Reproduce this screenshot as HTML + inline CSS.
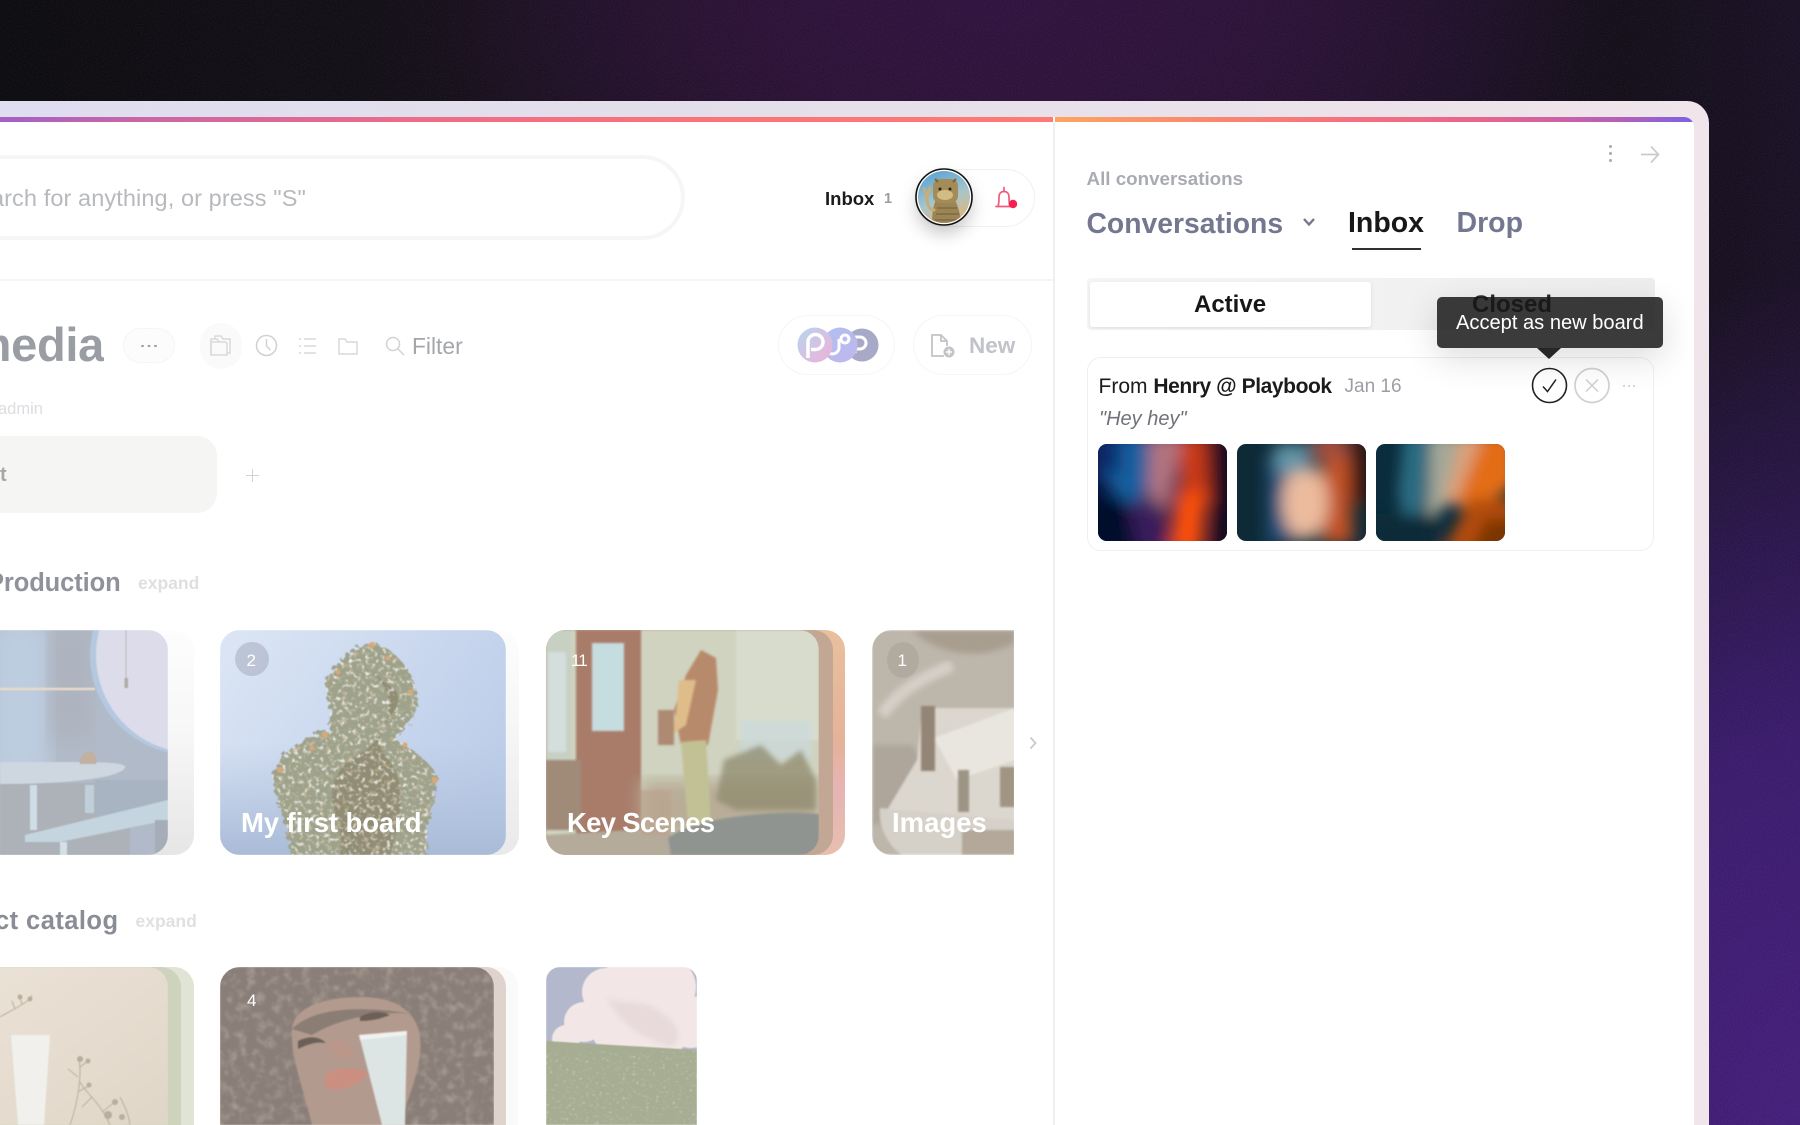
<!DOCTYPE html>
<html lang="en"><head><meta charset="utf-8"><title>Inbox</title>
<style>
html,body{margin:0;padding:0;width:1800px;height:1125px;overflow:hidden;background:#100c14}
body{font-family:"Liberation Sans",sans-serif}
#root{position:relative;width:1800px;height:1125px;overflow:hidden;contain:paint}
.a{position:absolute}
.t{position:absolute;white-space:nowrap;line-height:1}
.b{font-weight:700}
.card{position:absolute;overflow:hidden}
svg{display:block}
</style></head><body><div id="root">

<!-- background -->
<div class="a" style="left:0;top:0;width:1800px;height:1125px;background:
radial-gradient(500px 850px at 1800px 1125px,#421c78 0%,#37186a 45%,rgba(45,20,85,0) 100%),
radial-gradient(600px 300px at 1000px 0px,#2e0f3c 0%,rgba(44,15,56,.7) 50%,rgba(40,14,50,0) 100%),
linear-gradient(90deg,#09080c 0%,#110c15 25%,#220d2a 55%,#1c0d28 72%,#100b16 90%,#170d22 100%)"></div>
<svg class="a" style="left:0;top:0;opacity:.07" width="1800" height="1125"><filter id="n"><feTurbulence type="fractalNoise" baseFrequency=".9" numOctaves="2"/><feColorMatrix values="0 0 0 0 1 0 0 0 0 1 0 0 0 0 1 0 0 0 1.4 -.3"/></filter><rect width="1800" height="1125" filter="url(#n)"/></svg>

<!-- frame -->
<div class="a" style="left:0;top:100.500px;width:1709px;height:1024.500px;border-radius:0 22px 0 0;background:linear-gradient(90deg,#dfddf0 0%,#e3dfea 40%,#ece3ea 80%,#efe5ea 100%)"></div>
<div class="a" style="left:0;top:117px;width:1693.500px;height:1008px;border-radius:0 10px 0 0;background:#fff;overflow:hidden">
  <div class="a" style="left:0;top:0;width:1053px;height:5px;background:linear-gradient(90deg,#a55fc6 0%,#c766a6 12%,#ee6c88 40%,#fb7279 65%,#ff7a76 100%)"></div>
  <div class="a" style="left:1055px;top:0;width:639px;height:5px;background:linear-gradient(90deg,#fba562 0%,#fb8a6c 22%,#f7707f 45%,#e6648f 68%,#b55fb9 88%,#7d61e3 100%)"></div>
</div>
<div class="a" style="left:1053px;top:122px;width:1.500px;height:1003px;background:#eeeff2"></div>

<!-- search -->
<div class="a" style="left:-60px;top:159px;width:741px;height:77px;border-radius:40px;background:#fff;box-shadow:0 0 0 4px #f6f6f7"></div>
<div class="t" style="left:-38px;top:187px;font-size:23.500px;color:#b7b9bd;letter-spacing:.1px">Search for anything, or press "S"</div>
<div class="a" style="left:0;top:279px;width:1053px;height:1.500px;background:#f4f4f5"></div>

<!-- inbox + avatar -->
<div class="t b" style="left:825px;top:190px;font-size:18.500px;color:#1b1b1d">Inbox</div>
<div class="t b" style="left:884px;top:192px;font-size:14.500px;color:#9a9ca2">1</div>
<div class="a" style="left:915px;top:169px;width:118px;height:56px;border-radius:29px;background:#fff;border:1px solid #f0f0f2"></div>
<svg class="a" style="left:905px;top:158px;overflow:visible" width="80" height="80" viewBox="0 0 80 80">
  <defs><linearGradient id="cs" x1=".2" y1="0" x2=".6" y2="1"><stop offset="0" stop-color="#4f9fd8"/><stop offset=".55" stop-color="#a9c6c9"/><stop offset="1" stop-color="#eab06a"/></linearGradient>
  <filter id="as" x="-50%" y="-50%" width="200%" height="200%"><feDropShadow dx="0" dy="9" stdDeviation="8" flood-color="#000" flood-opacity=".2"/></filter><clipPath id="cc"><circle cx="39" cy="39" r="26"/></clipPath></defs>
  <circle cx="39" cy="39" r="28.500" fill="#fff" filter="url(#as)"/>
  <circle cx="39" cy="39" r="28" fill="#fff" stroke="#111" stroke-width="1.600"/>
  <g clip-path="url(#cc)"><rect x="10" y="10" width="60" height="60" fill="url(#cs)"/>
  <path d="M27 70C27 55 28 48 31 42H50C54 50 56 60 57 70Z" fill="#9c8554"/>
  <rect x="28" y="21" width="25" height="24" rx="7" fill="#a38c58"/>
  <path d="M30 21L33 24M51 21L48 24" stroke="#7a6435" stroke-width="2"/>
  <ellipse cx="40" cy="37" rx="8" ry="5" fill="#d3bc84"/>
  <circle cx="35" cy="31" r="1.500" fill="#2c2415"/><circle cx="45" cy="31" r="1.500" fill="#2c2415"/>
  <path d="M32 50H52M31 56H54M30 62H55" stroke="#7a6540" stroke-width="1.200"/>
  <path d="M29 52C24 52 22 46 22 38M22 38L19 31M22 38L25 30" stroke="#c9ad77" stroke-width="3" fill="none" stroke-linecap="round"/></g>
</svg>
<svg class="a" style="left:990px;top:184px" width="30" height="30" viewBox="0 0 30 30" fill="none"><path d="M6 22.500h16M8 22.500C9 20 9 17 9 13C9 9.500 11 7.500 14 7.500S19 9.500 19 13C19 17 19 20 20 22.500M14 7.500V3.500" stroke="#ef5b7e" stroke-width="1.700" stroke-linecap="round" stroke-linejoin="round"/><circle cx="23" cy="20" r="4.200" fill="#f5224f"/></svg>

<!-- title row -->
<div class="t b" style="left:-2px;top:320px;font-size:47px;color:#9a9da3;letter-spacing:-.3px;width:106px;direction:rtl;overflow:hidden;line-height:50px">media</div>
<div class="a" style="left:123px;top:328px;width:52px;height:35px;border-radius:18px;background:#fcfcfc;border:1px solid #f5f5f6;box-sizing:border-box"></div>
<div class="a" style="left:141px;top:344.500px;width:2.500px;height:2.500px;border-radius:50%;background:#9b9da2;box-shadow:6.500px 0 #9b9da2,13px 0 #9b9da2"></div>
<div class="a" style="left:200px;top:323px;width:42px;height:46px;border-radius:21px;background:#fafafb"></div>
<svg class="a" style="left:208px;top:333px" width="28" height="26" viewBox="0 0 28 26" fill="none" stroke="#d8d9dc" stroke-width="1.500"><path d="M3 9h14c1 0 2 1 2 2v11H3z"/><path d="M3 22V6h6l2 3M7 6V3h6l2 3h7v14h-3"/></svg>
<svg class="a" style="left:254px;top:333px" width="25" height="25" viewBox="0 0 25 25" fill="none" stroke="#d0d1d4" stroke-width="1.500"><circle cx="12.500" cy="12.500" r="10"/><path d="M12.500 6v7l4 4"/></svg>
<svg class="a" style="left:297px;top:336px" width="22" height="20" viewBox="0 0 22 20" fill="none" stroke="#d8d9dc" stroke-width="1.500"><path d="M7 3h12M7 10h12M7 17h12"/><path d="M2 3h2M2 10h2M2 17h2" stroke-dasharray="2 1"/></svg>
<svg class="a" style="left:337px;top:335px" width="22" height="22" viewBox="0 0 22 22" fill="none" stroke="#d8d9dc" stroke-width="1.500"><path d="M2 4h6l2 3h10v12H2z"/></svg>
<svg class="a" style="left:384px;top:335px" width="22" height="22" viewBox="0 0 22 22" fill="none" stroke="#d2d3d6" stroke-width="1.500"><circle cx="9" cy="9" r="6.500"/><path d="M14 14l6 6"/></svg>
<div class="t" style="left:412px;top:335px;font-size:22.800px;color:#a4a6ab">Filter</div>
<div class="t" style="left:-2px;top:401px;font-size:16.500px;color:#dcdde0">admin</div>

<div class="a" style="left:-40px;top:436px;width:257px;height:77px;border-radius:20px;background:#f5f5f3"></div>
<div class="t b" style="left:0;top:465px;font-size:20px;color:#a6a7a9">t</div>
<div class="a" style="left:246px;top:474.500px;width:13px;height:1.500px;background:#d2d3d6"></div>
<div class="a" style="left:251.800px;top:468.500px;width:1.500px;height:13px;background:#d2d3d6"></div>

<!-- right top pills -->
<div class="a" style="left:778px;top:315px;width:117px;height:60px;border-radius:30px;background:#fff;border:1px solid #f5f5f6;box-sizing:border-box"></div>
<svg class="a" style="left:795px;top:325px" width="85" height="40" viewBox="0 0 85 40">
  <defs><linearGradient id="p1" x1="0" y1="0" x2="1" y2="1"><stop offset="0" stop-color="#b5d6ee"/><stop offset="1" stop-color="#f0afd8"/></linearGradient>
  <linearGradient id="p2" x1="0" y1="0" x2="1" y2="1"><stop offset="0" stop-color="#afc0f2"/><stop offset="1" stop-color="#c1b6ec"/></linearGradient></defs>
  <circle cx="67" cy="20" r="16.500" fill="#a7a9c6"/><path d="M60 28V12h5a6 6 0 0 1 0 12h-4" stroke="#fff" stroke-width="3" fill="none"/>
  <circle cx="45" cy="20" r="17.500" fill="url(#p2)"/><path d="M44 14v10a7 7 0 0 1-10 4M50 10a4 4 0 1 1-.1 0" stroke="#fff" stroke-width="3" fill="none"/>
  <circle cx="20" cy="20" r="17.500" fill="url(#p1)"/><path d="M13 33V17a7.500 7.500 0 1 1 7.500 7.500H16" stroke="#fff" stroke-width="3.500" fill="none"/>
</svg>
<div class="a" style="left:913px;top:315px;width:119px;height:60px;border-radius:30px;background:#fff;border:1px solid #f5f5f6;box-sizing:border-box"></div>
<svg class="a" style="left:929px;top:333px" width="28" height="26" viewBox="0 0 28 26" fill="none" stroke="#c3c4c8" stroke-width="1.800"><path d="M15 23H3V2h9l6 6v5"/><path d="M12 2v6h6"/><circle cx="20" cy="19" r="5.500" fill="#c3c4c8" stroke="none"/><path d="M20 16v6M17 19h6" stroke="#fff" stroke-width="1.500"/></svg>
<div class="t b" style="left:969px;top:335px;font-size:22.500px;color:#c1c3c9">New</div>

<!-- section 1 -->
<div class="t b" style="left:-13px;top:571px;font-size:25.500px;color:#8f929a;letter-spacing:-.1px">Production</div>
<div class="t b" style="left:138px;top:575px;font-size:17.500px;color:#dedfe1">expand</div>

<!-- card 1 stack -->
<div class="a" style="left:-40px;top:630px;width:233.500px;height:225px;border-radius:20px;background:linear-gradient(180deg,#fdfdfd 0%,#f7f7f7 45%,#e6e6e7 100%)"></div>
<div class="card" style="left:-40px;top:630px;width:208px;height:225px;border-radius:20px">
<svg width="208" height="225" viewBox="0 0 208 225" style="filter:blur(.6px)">
 <defs><filter id="b3"><feGaussianBlur stdDeviation="3"/></filter><filter id="b12"><feGaussianBlur stdDeviation="12"/></filter></defs>
 <rect width="208" height="225" fill="#b0bac8"/>
 <rect x="30" y="-10" width="60" height="160" fill="#bdcde0" filter="url(#b12)"/>
 <rect x="90" y="-10" width="42" height="120" fill="#aeb4be" filter="url(#b12)"/>
 <circle cx="230" cy="25" r="100" fill="#b4c8e0"/>
 <circle cx="234" cy="25" r="98" fill="#dcdcea"/>
 <path d="M40 59H135" stroke="#e8dacb" stroke-width="2.500"/>
 <path d="M166 0V50" stroke="#bbb" stroke-width="1"/><rect x="164.500" y="48" width="3.500" height="10" fill="#b0aca6"/>
 <rect x="40" y="153" width="130" height="72" fill="#adb2b9"/>
 <rect x="135" y="150" width="73" height="40" fill="#a9b4c3"/>
 <path d="M40 132H120C155 132 168 134 165 138C158 148 110 154 40 154Z" fill="#ced7df"/>
 <path d="M120 134C118 128 126 120 133 122C137 126 137 132 136 134Z" fill="#c2b0a0"/>
 <rect x="70" y="155" width="7" height="45" fill="#cfdde6"/><rect x="125" y="155" width="9" height="28" fill="#bfd0da"/>
 <path d="M65 205L208 170V190L100 212H65Z" fill="#c4d5df"/><rect x="100" y="212" width="7" height="13" fill="#d3e0ea"/>
 <rect x="195" y="190" width="13" height="35" fill="#a5adb8"/>
</svg></div>

<!-- card 2 stack -->
<div class="a" style="left:220px;top:630px;width:298.500px;height:225px;border-radius:20px;background:linear-gradient(180deg,#fdfdfd 0%,#f7f7f8 40%,#e9e9eb 100%)"></div>
<div class="card" style="left:220px;top:630px;width:286px;height:225px;border-radius:20px">
<svg width="286" height="225" viewBox="0 0 286 225" style="filter:blur(.5px)">
 <defs><linearGradient id="sky" x1="0" y1="0" x2="1" y2=".6"><stop offset="0" stop-color="#dce6f5"/><stop offset=".5" stop-color="#ccd9ef"/><stop offset="1" stop-color="#bccde9"/></linearGradient>
 <linearGradient id="skb" x1="0" y1="0" x2="0" y2="1"><stop offset=".5" stop-color="#b5c5df" stop-opacity="0"/><stop offset="1" stop-color="#a9bbd7"/></linearGradient>
 <filter id="rag" x="-10%" y="-10%" width="120%" height="120%"><feTurbulence type="fractalNoise" baseFrequency=".2" numOctaves="2" seed="5" result="r"/><feDisplacementMap in="SourceGraphic" in2="r" scale="12"/></filter>
 <filter id="dot" x="0" y="0" width="100%" height="100%"><feTurbulence type="fractalNoise" baseFrequency=".24" numOctaves="2" seed="8"/><feColorMatrix values="0 0 0 0 .97 0 0 0 0 .95 0 0 0 0 .92 4.500 0 0 0 -2.500"/></filter>
 <filter id="dotb" x="0" y="0" width="100%" height="100%"><feTurbulence type="fractalNoise" baseFrequency=".18" numOctaves="2" seed="21"/><feColorMatrix values="0 0 0 0 .82 0 0 0 0 .62 0 0 0 0 .45 4 0 0 0 -2.300"/></filter>
 <clipPath id="tree"><path d="M70 225C72 205 55 170 52 145C60 125 85 105 110 100C112 85 108 60 105 55C112 35 135 15 153 12C175 20 195 40 197 70C195 85 188 100 175 108C190 120 212 130 218 150C215 170 205 190 207 225Z"/></clipPath></defs>
 <rect width="286" height="225" fill="url(#sky)"/><rect width="286" height="225" fill="url(#skb)"/>
 <path d="M70 225C72 205 55 170 52 145C60 125 85 105 110 100C112 85 108 60 105 55C112 35 135 15 153 12C175 20 195 40 197 70C195 85 188 100 175 108C190 120 212 130 218 150C215 170 205 190 207 225Z" fill="#9ea28a" filter="url(#rag)"/>
 <g clip-path="url(#tree)"><path d="M150 40C175 60 172 85 160 105S125 125 115 150S125 190 120 225H170C185 170 185 150 165 125S190 80 175 60Z" fill="#7e7459" opacity=".45"/><rect width="286" height="225" filter="url(#dotb)" opacity=".7"/><rect width="286" height="225" filter="url(#dot)" opacity=".85"/></g>
 <g fill="#dba776"><circle cx="152" cy="15" r="3"/><circle cx="118" cy="42" r="2.500"/><circle cx="190" cy="62" r="2.500"/><circle cx="60" cy="140" r="3"/><circle cx="215" cy="150" r="3"/><circle cx="168" cy="28" r="2.500"/><circle cx="105" cy="105" r="3"/><circle cx="92" cy="118" r="2.500"/><circle cx="185" cy="115" r="2.500"/></g>
</svg></div>
<div class="a" style="left:235px;top:642px;width:34px;height:34px;border-radius:50%;background:rgba(150,155,175,.42)"></div>
<div class="t" style="left:246.500px;top:651.500px;font-size:17px;color:#fff">2</div>
<div class="t b" style="left:241px;top:809px;font-size:27.500px;color:#fff;letter-spacing:-.1px">My first board</div>

<!-- card 3 stack -->
<div class="a" style="left:546px;top:630px;width:299px;height:225px;border-radius:20px;background:linear-gradient(180deg,#e8c09c 0%,#e5b29a 50%,#e6b4b4 70%,#e7bfae 100%)"></div>
<div class="a" style="left:546px;top:630px;width:286.500px;height:225px;border-radius:20px;background:#c2a795"></div>
<div class="card" style="left:546px;top:630px;width:273px;height:225px;border-radius:20px">
<svg width="273" height="225" viewBox="0 0 273 225" style="filter:blur(1.100px)">
 <defs><filter id="b2"><feGaussianBlur stdDeviation="2.500"/></filter><filter id="b8"><feGaussianBlur stdDeviation="8"/></filter></defs>
 <rect width="273" height="225" fill="#cfd3bf"/>
 <rect x="190" y="0" width="83" height="110" fill="#d8dccd"/>
 <rect x="0" y="0" width="25" height="150" fill="#c8d0c4"/>
 <rect x="30" y="0" width="65" height="205" fill="#a97c6a"/>
 <rect x="46" y="13" width="32" height="88" fill="#c6dde0"/>
 <rect x="2" y="22" width="18" height="100" fill="#d3dedd"/>
 <rect x="0" y="130" width="35" height="70" fill="#a08a78"/>
 <rect x="95" y="150" width="178" height="55" fill="#b9ad97" filter="url(#b8)"/>
 <path d="M140 45L155 20L170 28L172 60L162 115L135 115L128 80Z" fill="#b88a6c"/>
 <path d="M135 112L160 110L165 195H142Z" fill="#c2c195"/>
 <path d="M133 50C131 70 131 90 125 105L140 95L150 50Z" fill="#dfbd8b"/>
 <path d="M112 80H128V115H112Z" fill="#ae8a72"/>
 <rect x="195" y="90" width="70" height="40" fill="#cbdadc" opacity=".7" filter="url(#b2)"/>
 <path d="M170 170L178 130L215 115L235 135L255 120L270 150V180H190Z" fill="#8f8a6e" opacity=".75" filter="url(#b2)"/>
 <path d="M0 205L120 198L140 225H0Z" fill="#b5ab9b"/>
 <path d="M122 208C150 185 240 180 273 184V225H125Z" fill="#8f9490"/>
 <rect x="95" y="160" width="30" height="45" fill="#bba18c" opacity=".6"/>
</svg></div>
<div class="t" style="left:571px;top:651.500px;font-size:17px;color:#fff;letter-spacing:-1px">11</div>
<div class="t b" style="left:567px;top:809px;font-size:27.500px;color:#fff;letter-spacing:-.7px">Key Scenes</div>

<!-- card 4 -->
<div class="card" style="left:871.500px;top:630px;width:142.500px;height:225px;border-radius:20px 0 0 20px">
<svg width="143" height="225" viewBox="0 0 143 225" style="filter:blur(1px)">
 <rect width="143" height="225" fill="#bdb6aa"/>
 <path d="M40 0C70 30 120 28 143 12V0Z" fill="#a89e90" filter="url(#b3)"/>
 <path d="M10 85C30 55 60 45 80 35" stroke="#d5d0c8" stroke-width="12" fill="none" filter="url(#b3)"/>
 <path d="M0 115H40L50 130V170L20 190L0 195Z" fill="#aea69a" filter="url(#b2)"/>
 <path d="M50 78L143 78V200L95 210L15 180L45 130Z" fill="#dcd7ce"/>
 <path d="M62 108L143 78V130L85 150Z" fill="#e9e6e0"/>
 <rect x="49" y="76" width="14" height="65" fill="#938676"/>
 <rect x="86" y="140" width="11" height="42" fill="#9c9484"/><rect x="128" y="137" width="15" height="40" fill="#a09583"/>
 <path d="M8 178L143 190V225H30C15 215 6 195 8 178Z" fill="#d5d1c9"/>
 <rect x="90" y="200" width="53" height="25" fill="#b3a899"/>
</svg></div>
<div class="a" style="left:887px;top:642px;width:32px;height:36px;border-radius:50%;background:rgba(120,115,105,.16)"></div>
<div class="t" style="left:897.500px;top:651.500px;font-size:17px;color:#fff">1</div>
<div class="t b" style="left:892px;top:809px;font-size:27.500px;color:#fff">Images</div>
<svg class="a" style="left:1028px;top:735px" width="10" height="16" viewBox="0 0 10 16" fill="none"><path d="M2.500 2.500L7.500 8L2.500 13.500" stroke="#c8cad2" stroke-width="1.800"/></svg>

<!-- section 2 -->
<div class="t b" style="right:1681.500px;top:909px;font-size:25.500px;color:#8a8d96;letter-spacing:.45px"><span style="visibility:hidden">Produ</span>ct catalog</div>
<div class="t b" style="left:135.500px;top:913px;font-size:17.500px;color:#dfe0e2">expand</div>

<div class="a" style="left:-40px;top:967px;width:233.500px;height:158px;border-radius:20px 20px 0 0;background:#dfe4d4"></div>
<div class="a" style="left:-40px;top:967px;width:221px;height:158px;border-radius:20px 20px 0 0;background:#cdd4bb"></div>
<div class="card" style="left:-40px;top:967px;width:208px;height:158px;border-radius:20px 20px 0 0">
<svg width="208" height="158" viewBox="0 0 208 158" style="filter:blur(.6px)">
 <defs><linearGradient id="bg1" x1="0" y1="0" x2="1" y2="1"><stop offset="0" stop-color="#ece3d7"/><stop offset="1" stop-color="#e0d6c8"/></linearGradient></defs>
 <rect width="208" height="158" fill="url(#bg1)"/>
 <path d="M51 68H90L84 158H58Z" fill="#f1f0ec"/>
 <g stroke="#bdb3a4" stroke-width="1.100" fill="none"><path d="M40 50C48 45 60 40 70 32M55 42L52 34M62 38L60 30M68 34L72 28"/><path d="M110 158C120 130 122 100 118 90M118 110L108 102M120 100L128 94M118 125L130 118"/><path d="M150 158C140 135 125 125 120 115M142 145L155 135M132 130L122 140"/><path d="M170 158C168 145 165 140 160 130"/></g>
 <g fill="#b8ae9e"><circle cx="120" cy="92" r="3"/><circle cx="128" cy="94" r="2.500"/><circle cx="129" cy="118" r="2.500"/><circle cx="155" cy="135" r="3"/><circle cx="70" cy="32" r="2.500"/><circle cx="60" cy="30" r="2.500"/><circle cx="148" cy="148" r="4"/><circle cx="162" cy="150" r="3"/></g>
</svg></div>

<div class="a" style="left:220px;top:967px;width:298px;height:158px;border-radius:20px 20px 0 0;background:#fafafa"></div>
<div class="a" style="left:220px;top:967px;width:286px;height:158px;border-radius:20px 20px 0 0;background:#dfd3ce"></div>
<div class="card" style="left:220px;top:967px;width:273.500px;height:158px;border-radius:20px 20px 0 0">
<svg width="274" height="158" viewBox="0 0 274 158" style="filter:blur(.9px)">
 <defs><filter id="curl" x="0" y="0" width="100%" height="100%"><feTurbulence type="fractalNoise" baseFrequency=".11" numOctaves="3" seed="4"/><feColorMatrix values="0 0 0 0 .66 0 0 0 0 .57 0 0 0 0 .51 1.800 0 0 0 -.85"/></filter></defs>
 <rect width="274" height="158" fill="#8a7f78"/>
 <rect width="274" height="158" filter="url(#curl)" opacity=".55"/>
 <path d="M72 62C74 40 105 30 140 30C175 30 198 44 200 72C203 95 190 125 180 158H92C86 130 70 90 72 62Z" fill="#b39a8e"/>
 <path d="M72 62C90 44 130 36 198 48C170 42 120 50 92 68Z" fill="#8a7d74"/>
 <path d="M78 74C90 68 100 70 106 76C96 74 86 78 78 82ZM140 50C150 44 162 44 170 48C160 52 150 54 140 54Z" fill="#6b5f58"/>
 <path d="M108 77C112 72 128 70 134 86C130 94 112 94 108 77Z" fill="#bb978a"/>
 <path d="M105 108C118 98 136 100 148 106C140 120 118 126 105 120Z" fill="#cb8f82"/>
 <path d="M139 68L187 64L185 158H162Z" fill="#dde4e4"/>
 <path d="M139 68L187 64L186 68L140 73Z" fill="#f0f2f1"/>
</svg></div>
<div class="t" style="left:247px;top:991.500px;font-size:17px;color:#fff">4</div>

<div class="card" style="left:546px;top:967px;width:151px;height:158px;border-radius:14px 14px 0 0">
<svg width="151" height="158" viewBox="0 0 151 158" style="filter:blur(.6px)">
 <defs><filter id="fl" x="0" y="0" width="100%" height="100%"><feTurbulence type="fractalNoise" baseFrequency=".3 .45" numOctaves="2" seed="6"/><feColorMatrix values="0 0 0 0 .8 0 0 0 0 .8 0 0 0 0 .72 3 0 0 0 -1.800"/></filter></defs>
 <rect width="151" height="90" fill="#b3b8cd"/>
 <g fill="#f2e7e6"><circle cx="20" cy="72" r="14"/><circle cx="38" cy="55" r="20"/><circle cx="60" cy="25" r="24"/><circle cx="85" cy="15" r="28"/><circle cx="120" cy="20" r="30"/><circle cx="75" cy="60" r="30"/><circle cx="115" cy="60" r="30"/><circle cx="145" cy="55" r="26"/></g>
 <path d="M60 30C80 40 100 30 118 48C132 58 138 70 125 80C100 72 78 62 60 30Z" fill="#e8d9da" filter="url(#b3)"/>
 <path d="M0 74L151 83V158H0Z" fill="#a6ad92"/>
 <rect y="84" width="151" height="74" filter="url(#fl)" opacity=".7"/>
</svg></div>

<!-- right panel -->
<svg class="a" style="left:1604px;top:142px" width="14" height="24" viewBox="0 0 14 24"><g fill="#a9abb0"><circle cx="6.500" cy="4.500" r="1.500"/><circle cx="6.500" cy="11.500" r="1.500"/><circle cx="6.500" cy="18.500" r="1.500"/></g></svg>
<svg class="a" style="left:1639px;top:142px" width="22" height="24" viewBox="0 0 22 24" fill="none"><path d="M2 12.500H19.500M12 4.500L19.500 12.500L12 20.500" stroke="#c9cacd" stroke-width="1.700"/></svg>
<div class="t b" style="left:1086.500px;top:170px;font-size:18.800px;color:#a9abb3">All conversations</div>
<div class="t b" style="left:1086.500px;top:209px;font-size:28.300px;color:#73778f">Conversations</div>
<svg class="a" style="left:1302px;top:216px" width="14" height="12" viewBox="0 0 14 12" fill="none"><path d="M2 3L7 8.500L12 3" stroke="#73778f" stroke-width="2.400"/></svg>
<div class="t b" style="left:1348px;top:209px;font-size:28.500px;color:#18181a">Inbox</div>
<div class="a" style="left:1352px;top:248px;width:69px;height:2px;background:#2f3036"></div>
<div class="t b" style="left:1456.500px;top:209px;font-size:28.500px;color:#73778f">Drop</div>

<div class="a" style="left:1087px;top:278px;width:568px;height:52px;border-radius:4px;background:linear-gradient(90deg,#f5f5f5,#eeeeee)"></div>
<div class="a" style="left:1090px;top:282px;width:280.500px;height:45px;border-radius:3px;background:#fff;box-shadow:0 1px 3px rgba(0,0,0,.1)"></div>
<div class="t b" style="left:1194px;top:292.500px;font-size:24px;color:#17171a">Active</div>
<div class="t b" style="left:1472px;top:292.500px;font-size:24px;color:#2b2b2e">Closed</div>

<div class="a" style="left:1087px;top:357px;width:567px;height:194px;border-radius:14px;background:#fff;border:1.500px solid #efeff1;box-sizing:border-box"></div>
<div class="t" style="left:1098.500px;top:375.500px;font-size:21px;color:#1b1b1d">From <span class="b" style="letter-spacing:-.42px">Henry @ Playbook</span></div>
<div class="t" style="left:1344.500px;top:376.500px;font-size:19px;color:#9c9ea5">Jan 16</div>
<div class="t" style="left:1099px;top:408.500px;font-size:20px;font-style:italic;color:#6f7279">"Hey hey"</div>

<svg class="a" style="left:1530px;top:366px" width="40" height="40" viewBox="0 0 40 40" fill="none"><circle cx="19.500" cy="19.500" r="17" stroke="#232325" stroke-width="1.600"/><path d="M13 20.500L17.500 25.500L26 13.500" stroke="#232325" stroke-width="1.500"/></svg>
<svg class="a" style="left:1572px;top:366px" width="40" height="40" viewBox="0 0 40 40" fill="none"><circle cx="20" cy="19.500" r="17" stroke="#d0d0d6" stroke-width="1.700"/><path d="M14 13.500L26 25.500M26 13.500L14 25.500" stroke="#cfd0d4" stroke-width="1.500"/></svg>
<div class="a" style="left:1623px;top:384.500px;width:2px;height:2px;border-radius:50%;background:#c9cad0;box-shadow:5px 0 #c9cad0,10px 0 #c9cad0"></div>

<!-- thumbnails -->
<div class="a" style="left:1098px;top:443.500px;width:129px;height:97px;border-radius:9px;overflow:hidden">
<svg width="129" height="97" viewBox="0 0 129 97"><defs><filter id="g1" x="-40%" y="-40%" width="180%" height="180%"><feGaussianBlur stdDeviation="8"/></filter></defs>
<rect width="129" height="97" fill="#07103a"/>
<g filter="url(#g1)"><path d="M-5 -10H55L50 45L35 70L0 30Z" fill="#125e9f"/><path d="M52 -10H85L75 45L68 70L50 55Z" fill="#b3747f"/><path d="M82 -10H110L112 60L80 70Z" fill="#cb3a12"/><path d="M78 48H108L104 110H70Z" fill="#fb5010"/><path d="M114 -10H140V110H112Z" fill="#14081e"/><path d="M-10 55H30V110H-10Z" fill="#030b2a"/><path d="M30 60L60 55L68 80V110H40Z" fill="#3b1a5c"/><path d="M-5 -10H22V30H-5Z" fill="#0b2a6a"/></g>
</svg></div>
<div class="a" style="left:1237px;top:443.500px;width:129px;height:97px;border-radius:9px;overflow:hidden">
<svg width="129" height="97" viewBox="0 0 129 97"><defs><filter id="g2" x="-40%" y="-40%" width="180%" height="180%"><feGaussianBlur stdDeviation="8"/></filter></defs>
<rect width="129" height="97" fill="#0d2a36"/>
<g filter="url(#g2)"><path d="M30 10H58V100H30Z" fill="#24507c"/><path d="M85 5H112L116 100H85Z" fill="#c25226"/><path d="M113 -10H140V60H113Z" fill="#2f1714"/><ellipse cx="68" cy="58" rx="23" ry="38" fill="#ecbb9e"/><path d="M38 0H72V28H38Z" fill="#6296a8"/><path d="M75 -10H110V15H75Z" fill="#a2503f"/></g>
</svg></div>
<div class="a" style="left:1376px;top:443.500px;width:129px;height:97px;border-radius:9px;overflow:hidden">
<svg width="129" height="97" viewBox="0 0 129 97"><defs><filter id="g3" x="-40%" y="-40%" width="180%" height="180%"><feGaussianBlur stdDeviation="7"/></filter></defs>
<rect width="129" height="97" fill="#0a2c3c"/>
<g filter="url(#g3)"><path d="M28 -10H55L48 70L30 85L22 50Z" fill="#2c6c82"/><path d="M55 -10H85L70 60L50 85Z" fill="#a5a898"/><path d="M85 -10H108L80 60L68 60Z" fill="#dca078"/><path d="M108 -10H140V40L95 70L80 60Z" fill="#e36d16"/><path d="M95 55H140V110H65Z" fill="#b24c0c"/><path d="M110 75H140V110H95Z" fill="#7b3404"/><path d="M-10 70H60V110H-10Z" fill="#0a2a38"/></g>
</svg></div>

<!-- tooltip -->
<div class="a" style="left:1436.500px;top:297px;width:226.500px;height:51px;border-radius:5px;background:rgba(22,22,22,.84);box-shadow:0 10px 35px rgba(0,0,0,.14)"></div>
<svg class="a" style="left:1537px;top:348px" width="24" height="11" viewBox="0 0 24 11"><path d="M0 0H24L12 11Z" fill="#262626"/></svg>
<div class="t" style="left:1456px;top:313px;font-size:20.100px;color:#fff">Accept as new board</div>

</div></body></html>
